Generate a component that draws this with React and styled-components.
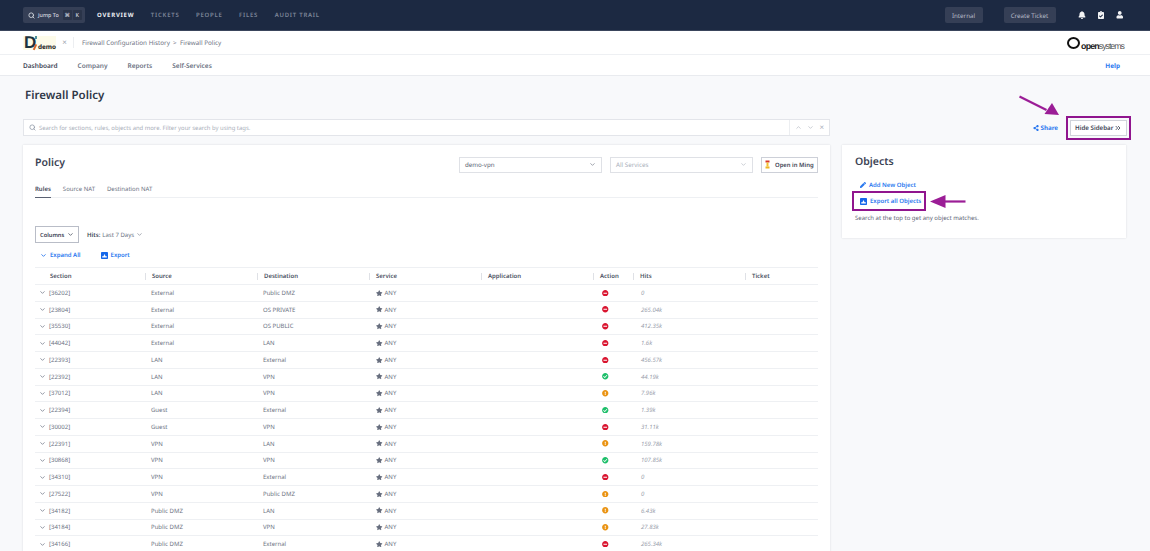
import styled, { createGlobalStyle } from 'styled-components';
import { ChevronDown, ChevronsRight, Search } from 'lucide-react';
import {
    FaBell,
    FaCheckCircle,
    FaClipboardCheck,
    FaExclamationCircle,
    FaMinusCircle,
    FaPen,
    FaShareAlt,
    FaStar,
    FaUser,
} from 'react-icons/fa';

// data ****************************************
const rules = [
    ['36202', 'External', 'Public DMZ', 'deny', '0'],
    ['23804', 'External', 'OS PRIVATE', 'deny', '265.04k'],
    ['35530', 'External', 'OS PUBLIC', 'deny', '412.35k'],
    ['44042', 'External', 'LAN', 'deny', '1.6k'],
    ['22393', 'LAN', 'External', 'deny', '456.57k'],
    ['22392', 'LAN', 'VPN', 'allow', '44.19k'],
    ['37012', 'LAN', 'VPN', 'warn', '7.96k'],
    ['22394', 'Guest', 'External', 'allow', '1.39k'],
    ['30002', 'Guest', 'VPN', 'deny', '31.11k'],
    ['22391', 'VPN', 'LAN', 'warn', '159.78k'],
    ['30868', 'VPN', 'VPN', 'allow', '107.85k'],
    ['34310', 'VPN', 'External', 'deny', '0'],
    ['27522', 'VPN', 'Public DMZ', 'warn', '0'],
    ['34182', 'Public DMZ', 'LAN', 'warn', '6.43k'],
    ['34184', 'Public DMZ', 'VPN', 'warn', '27.83k'],
    ['34166', 'Public DMZ', 'External', 'deny', '265.34k'],
];

const columns = [
    ['Section', false],
    ['Source', true],
    ['Destination', true],
    ['Service', true],
    ['Application', true],
    ['Action', true],
    ['Hits', true],
    ['Ticket', true],
];
// *********************************************

const ActionIcon = ({ type }) => {
    if (type === 'allow') return <FaCheckCircle size={6.5} color="#1fbf6b" />;
    if (type === 'warn') return <FaExclamationCircle size={6.5} color="#ea9312" />;
    return <FaMinusCircle size={6.5} color="#d9142f" />;
};

const ExportIcon = () => (
    <svg width="7" height="7" viewBox="0 0 7 7">
        <rect width="7" height="7" rx="0.8" fill="#1467ea" />
        <path d="M1.2 5.4h4.6V4.2H4.6L3.5 2 2.4 4.2H1.2z" fill="#fff" />
    </svg>
);

const App = () => {
    return (
        <Page>
            <GlobalStyle />
            <TopBar>
                <JumpTo>
                    <Search size={7} strokeWidth={3} />
                    <JumpLabel>Jump To</JumpLabel>
                    <Key>⌘</Key>
                    <Key>K</Key>
                </JumpTo>
                <TopLink $active>OVERVIEW</TopLink>
                <TopLink>TICKETS</TopLink>
                <TopLink>PEOPLE</TopLink>
                <TopLink>FILES</TopLink>
                <TopLink>AUDIT TRAIL</TopLink>
                <TopActions>
                    <TopButton $width={38}>Internal</TopButton>
                    <TopButton $width={52}>Create Ticket</TopButton>
                    <TopIcons>
                        <FaBell size={8} />
                        <FaClipboardCheck size={8} />
                        <FaUser size={7.5} />
                    </TopIcons>
                </TopActions>
            </TopBar>

            <CrumbBar>
                <DemoLogo>
                    <DemoMark>D</DemoMark>
                    <DemoWord>demo</DemoWord>
                </DemoLogo>
                <CloseMark>×</CloseMark>
                <Crumbs>Firewall Configuration History&nbsp; &gt; &nbsp;Firewall Policy</Crumbs>
                <OpenLogo>
                    <OpenRing />
                    <OpenBold>open</OpenBold>
                    <OpenThin>systems</OpenThin>
                </OpenLogo>
            </CrumbBar>

            <NavBar>
                <NavLink $active>Dashboard</NavLink>
                <NavLink>Company</NavLink>
                <NavLink>Reports</NavLink>
                <NavLink>Self-Services</NavLink>
                <HelpLink>Help</HelpLink>
            </NavBar>

            <PageTitle>Firewall Policy</PageTitle>

            <ToolRow>
                <SearchBox>
                    <Search size={7} strokeWidth={2.5} color="#8a93a3" />
                    <SearchHint>Search for sections, rules, objects and more. Filter your search by using tags.</SearchHint>
                    <SearchTools>
                        <ChevronDown size={7} style={{ transform: 'rotate(180deg)' }} />
                        <ChevronDown size={7} />
                        <span>×</span>
                    </SearchTools>
                </SearchBox>
                <SideTools>
                    <ShareLink>
                        <FaShareAlt size={6} />
                        Share
                    </ShareLink>
                    <HideSidebar>
                        Hide Sidebar
                        <ChevronsRight size={8} strokeWidth={2.5} />
                    </HideSidebar>
                </SideTools>
            </ToolRow>

            <Columns>
                <PolicyCard>
                    <PolicyHead>
                        <PolicyTitle>Policy</PolicyTitle>
                        <Select>
                            demo-vpn
                            <ChevronDown size={7} />
                        </Select>
                        <Select $placeholder>
                            All Services
                            <ChevronDown size={7} />
                        </Select>
                        <MingButton>
                            <svg width="5" height="9" viewBox="0 0 5 9">
                                <path d="M0.5 0.5h4v2h-4z" fill="#d8382b" />
                                <path d="M1.5 2.5h2v4h-2z" fill="#f2c230" />
                                <path d="M0.5 6.5h4v2h-4z" fill="#efb625" />
                            </svg>
                            Open in Ming
                        </MingButton>
                    </PolicyHead>

                    <Tabs>
                        <Tab $active>Rules</Tab>
                        <Tab>Source NAT</Tab>
                        <Tab>Destination NAT</Tab>
                    </Tabs>

                    <FilterRow>
                        <ColumnsButton>
                            Columns
                            <ChevronDown size={7} strokeWidth={2.5} />
                        </ColumnsButton>
                        <HitsFilter>
                            <b>Hits:</b> Last 7 Days
                            <ChevronDown size={7} />
                        </HitsFilter>
                    </FilterRow>

                    <TableActions>
                        <TableAction>
                            <ChevronDown size={7} strokeWidth={3} />
                            Expand All
                        </TableAction>
                        <TableAction>
                            <ExportIcon />
                            Export
                        </TableAction>
                    </TableActions>

                    <HeaderRow>
                        {columns.map(([name, divided]) => (
                            <HeaderCell key={name} $divided={divided}>{name}</HeaderCell>
                        ))}
                    </HeaderRow>
                    {rules.map(([id, source, destination, action, hits]) => (
                        <Row key={id}>
                            <SectionCell>
                                <ChevronDown size={7} strokeWidth={2.5} />
                                [{id}]
                            </SectionCell>
                            <Cell>{source}</Cell>
                            <Cell>{destination}</Cell>
                            <ServiceCell>
                                <FaStar size={6.5} />
                                ANY
                            </ServiceCell>
                            <Cell />
                            <ActionCell><ActionIcon type={action} /></ActionCell>
                            <HitsCell>{hits}</HitsCell>
                            <Cell />
                        </Row>
                    ))}
                </PolicyCard>

                <ObjectsCard>
                    <CardTitle>Objects</CardTitle>
                    <ObjectLinks>
                        <ObjectLink>
                            <FaPen size={6} />
                            Add New Object
                        </ObjectLink>
                        <ObjectLink $marked>
                            <ExportIcon />
                            Export all Objects
                        </ObjectLink>
                    </ObjectLinks>
                    <ObjectsHint>Search at the top to get any object matches.</ObjectsHint>
                </ObjectsCard>
            </Columns>

            {/* purple callout arrows drawn on top of the screenshot */}
            <Callout viewBox="0 0 1150 551">
                <g fill="#9b1d96">
                    <path d="M1020 95.5l27 13.5 -1 2 -27 -13.5z" />
                    <path d="M1059 115l-14.5 -1 7.5 -11z" />
                    <path d="M944 200.4h21.5v2.2H944z" />
                    <path d="M930 201.5l15.5 -6.5v13z" />
                </g>
            </Callout>
        </Page>
    );
};

const GlobalStyle = createGlobalStyle`
    html, body {
        margin: 0;
        height: 100%;
        overflow: hidden;
        background: #f8f9fb;
    }

    * {
        box-sizing: border-box;
    }
`;

const Page = styled.div`
    position: relative;
    width: 1150px;
    height: 551px;
    overflow: hidden;
    background: #f8f9fb;
    color: #3c4354;
    font-family: "Noto Sans", "Liberation Sans", sans-serif;
    font-size: 6.2px;
    text-rendering: geometricPrecision;
    white-space: nowrap;
`;

const TopBar = styled.div`
    display: flex;
    align-items: center;
    height: 31px;
    padding: 0 23px;
    background: #1c2942;
    border-bottom: 1px solid #3a455c;
`;

const JumpTo = styled.div`
    display: flex;
    align-items: center;
    gap: 1px;
    width: 62px;
    height: 16px;
    margin-right: 12px;
    padding: 0 3px 0 5px;
    border-radius: 2px;
    background: #353f56;
    color: #d5d9e0;
    font-size: 5.4px;
    font-weight: 500;
`;

const JumpLabel = styled.span`
    margin: 0 3px 0 2px;
`;

const Key = styled.span`
    display: inline-flex;
    justify-content: center;
    align-items: center;
    width: 9px;
    height: 10px;
    border-radius: 1px;
    background: #2a3449;
    font-size: 5.5px;
`;

const TopLink = styled.span`
    margin-right: 16.5px;
    color: ${(props) => props.$active ? '#eef0f4' : '#7d8699'};
    font-size: 6px;
    font-weight: ${(props) => props.$active ? 700 : 600};
    letter-spacing: 0.75px;
`;

const TopActions = styled.div`
    display: flex;
    align-items: center;
    margin-left: auto;
`;

const TopButton = styled.div`
    display: flex;
    justify-content: center;
    align-items: center;
    width: ${(props) => props.$width}px;
    height: 16px;
    margin-right: 21px;
    border-radius: 2px;
    background: #353f56;
    color: #b7bdc9;
    font-size: 6.2px;
`;

const TopIcons = styled.div`
    display: flex;
    align-items: center;
    gap: 11px;
    margin-right: 4px;
    margin-left: 1px;
    color: #f2f3f5;
`;

const CrumbBar = styled.div`
    display: flex;
    align-items: center;
    height: 24px;
    padding: 0 23px;
    background: #fff;
    border-bottom: 1px solid #eef0f3;
`;

const DemoLogo = styled.div`
    display: flex;
    align-items: flex-end;
    width: 33px;
    height: 14px;
    background: #fdfbe9;
`;

const DemoMark = styled.span`
    position: relative;
    width: 14px;
    height: 14px;
    padding-left: 1px;
    color: #1d3340;
    font-family: "Liberation Sans", sans-serif;
    font-size: 17px;
    font-weight: 700;
    line-height: 14px;

    &::before {
        content: "";
        position: absolute;
        top: 0;
        right: 0;
        width: 2px;
        height: 3px;
        background: #4f8f9a;
    }

    &::after {
        content: "";
        position: absolute;
        top: 8px;
        right: 1px;
        width: 1.5px;
        height: 6px;
        background: #d9672b;
        transform: rotate(25deg);
    }
`;

const DemoWord = styled.span`
    color: #222;
    font-size: 6.4px;
    font-weight: 700;
    line-height: 7px;
    margin-left: 1px;
`;

const CloseMark = styled.span`
    width: 16px;
    margin-left: 2px;
    margin-right: 8px;
    padding-right: 2px;
    border-right: 1px solid #eceef1;
    color: #9aa1ad;
    font-size: 8px;
    text-align: center;
`;

const Crumbs = styled.span`
    color: #6f7685;
    font-size: 6.3px;
`;

const OpenLogo = styled.div`
    display: flex;
    align-items: flex-end;
    margin-top: 3px;
    margin-left: auto;
    margin-right: 3px;
    color: #1b1b1b;
`;

const OpenRing = styled.span`
    width: 13px;
    height: 12px;
    margin-right: 1px;
    margin-bottom: 2px;
    border: 2.6px solid #111;
    border-radius: 50%;
`;

const OpenBold = styled.span`
    font-family: "Liberation Sans", sans-serif;
    font-size: 8.8px;
    font-weight: 700;
    letter-spacing: -0.85px;
    line-height: 9px;
`;

const OpenThin = styled.span`
    color: #555;
    font-family: "Liberation Sans", sans-serif;
    font-size: 8.8px;
    letter-spacing: -1px;
    line-height: 9px;
`;

const NavBar = styled.div`
    display: flex;
    align-items: center;
    gap: 20px;
    height: 21px;
    padding: 0 30px 0 23px;
    background: #fff;
    border-bottom: 1px solid #e9ebef;
`;

const NavLink = styled.span`
    color: ${(props) => props.$active ? '#3c4354' : '#6c7383'};
    font-size: 6.5px;
    font-weight: 600;
`;

const HelpLink = styled.span`
    margin-left: auto;
    color: #2a78ef;
    font-size: 6.4px;
    font-weight: 700;
`;

const PageTitle = styled.h1`
    height: 43px;
    margin: 0;
    padding: 12px 25px 0;
    color: #2f3747;
    font-size: 11.5px;
    font-weight: 600;
    line-height: 16px;
`;

const ToolRow = styled.div`
    display: flex;
    align-items: center;
    padding: 0 23px 0 23px;
`;

const SearchBox = styled.div`
    display: flex;
    align-items: center;
    gap: 3px;
    width: 807px;
    height: 17px;
    padding: 0 5px;
    background: #fff;
    border: 1px solid #e3e5ea;
`;

const SearchHint = styled.span`
    color: #a8aeb9;
    font-size: 5.9px;
`;

const SearchTools = styled.div`
    display: flex;
    align-items: center;
    gap: 5px;
    margin-left: auto;
    padding-left: 5px;
    height: 100%;
    border-left: 1px solid #eceef1;
    color: #a8aeb9;
    font-size: 8px;
`;

const SideTools = styled.div`
    display: flex;
    align-items: center;
    margin-left: auto;
`;

const ShareLink = styled.span`
    display: flex;
    align-items: center;
    gap: 2px;
    margin-right: 12px;
    color: #2a78ef;
    font-size: 6.2px;
    font-weight: 700;
`;

const HideSidebar = styled.div`
    display: flex;
    justify-content: space-between;
    align-items: center;
    width: 57px;
    height: 16px;
    padding: 0 4px;
    border: 1px solid #d0d3da;
    background: #fff;
    color: #3c4354;
    font-size: 6.2px;
    font-weight: 600;
    outline: 2px solid #90158e;
    outline-offset: 2.5px;
`;

const Columns = styled.div`
    display: flex;
    align-items: flex-start;
    gap: 12px;
    padding: 9px 24px 0 23px;
`;

const Card = styled.div`
    background: #fff;
    box-shadow: 0 0 2px rgba(30, 40, 60, 0.14);
`;

const PolicyCard = styled(Card)`
    flex: none;
    width: 807px;
    padding: 0 12px;
`;

const PolicyHead = styled.div`
    display: flex;
    align-items: center;
    height: 39px;
`;

const CardTitle = styled.h2`
    margin: 0;
    color: #3c4354;
    font-size: 10.5px;
    font-weight: 600;
    line-height: 14px;
`;

const PolicyTitle = styled(CardTitle)`
    margin-bottom: 4px;
`;

const Select = styled.div`
    display: flex;
    justify-content: space-between;
    align-items: center;
    width: 143px;
    height: 16px;
    margin-left: ${(props) => props.$placeholder ? '8px' : 'auto'};
    padding: 0 5px;
    background: #fff;
    border: 1px solid #dfe1e6;
    color: ${(props) => props.$placeholder ? '#a8aeb9' : '#5d6474'};
    font-size: 6.2px;
`;

const MingButton = styled.div`
    display: flex;
    align-items: center;
    gap: 5px;
    width: 57px;
    height: 16px;
    margin-left: 8px;
    padding: 0 3px;
    background: #fff;
    border: 1px solid #cdd0d8;
    color: #3c4354;
    font-size: 5.9px;
    font-weight: 600;
`;

const Tabs = styled.div`
    display: flex;
    gap: 12px;
    height: 14px;
    padding-top: 1px;
    border-bottom: 1px solid #eef0f3;
`;

const Tab = styled.span`
    height: 13px;
    color: ${(props) => props.$active ? '#3c4354' : '#6c7383'};
    font-size: 6px;
    font-weight: ${(props) => props.$active ? 600 : 400};
    border-bottom: ${(props) => props.$active ? '1px solid #5a6172' : 'none'};
`;

const FilterRow = styled.div`
    display: flex;
    align-items: center;
    gap: 8px;
    margin-top: 28px;
`;

const ColumnsButton = styled.div`
    display: flex;
    justify-content: space-between;
    align-items: center;
    width: 44px;
    height: 17px;
    padding: 0 4px;
    border: 1px solid #b9bdc7;
    color: #3c4354;
    font-size: 5.7px;
    font-weight: 600;
`;

const HitsFilter = styled.div`
    display: flex;
    align-items: center;
    gap: 2px;
    color: #6c7383;
    font-size: 6px;

    b {
        color: #3c4354;
        font-weight: 600;
    }
`;

const TableActions = styled.div`
    display: flex;
    align-items: center;
    gap: 20px;
    height: 24px;
    padding-left: 5px;
`;

const TableAction = styled.span`
    display: flex;
    align-items: center;
    gap: 3px;
    color: #2a78ef;
    font-size: 6px;
    font-weight: 600;
`;

const gridColumns = '110px 112px 112px 112px 112px 40px 112px 72px';

const HeaderRow = styled.div`
    display: grid;
    grid-template-columns: ${gridColumns};
    align-items: center;
    height: 18px;
    border-top: 1px solid #eef0f3;
    border-bottom: 1px solid #eef0f3;
`;

const HeaderCell = styled.span`
    padding-left: ${(props) => props.$divided ? '6px' : '15px'};
    border-left: ${(props) => props.$divided ? '1px solid #dfe1e6' : 'none'};
    color: #4a5162;
    font-size: 6px;
    font-weight: 600;
    line-height: 7px;
`;

const Row = styled.div`
    display: grid;
    grid-template-columns: ${gridColumns};
    align-items: center;
    height: 16.75px;
    border-bottom: 1px solid #eef0f3;
`;

const Cell = styled.span`
    padding-left: 6px;
    color: #6c7383;
    font-size: 6px;
`;

const SectionCell = styled(Cell)`
    display: flex;
    align-items: center;
    gap: 3px;
    padding-left: 4px;
`;

const ServiceCell = styled(Cell)`
    display: flex;
    align-items: center;
    gap: 2px;
    padding-left: 7px;

    svg {
        color: #676e7e;
    }
`;

const ActionCell = styled(Cell)`
    display: flex;
    padding-left: 9px;
`;

const HitsCell = styled(Cell)`
    padding-left: 8px;
    color: #9aa0ac;
    font-style: italic;
`;

const ObjectsCard = styled(Card)`
    flex: none;
    width: 284px;
    height: 93px;
    padding: 10px 13px 0;
`;

const ObjectLinks = styled.div`
    display: flex;
    flex-direction: column;
    gap: 6px;
    margin-top: 11px;
    margin-left: 2px;
`;

const ObjectLink = styled.span`
    display: flex;
    align-items: center;
    gap: 3px;
    align-self: flex-start;
    height: 10px;
    padding-left: 3px;
    color: #2a78ef;
    font-size: 6px;
    font-weight: 600;
    ${(props) => props.$marked ? 'outline: 2px solid #90158e; outline-offset: 3px;' : ''}
`;

const ObjectsHint = styled.p`
    margin: 8px 0 0;
    color: #5d6474;
    font-size: 6px;
`;

const Callout = styled.svg`
    position: absolute;
    top: 0;
    left: 0;
    width: 1150px;
    height: 551px;
    pointer-events: none;
`;

export default App;
